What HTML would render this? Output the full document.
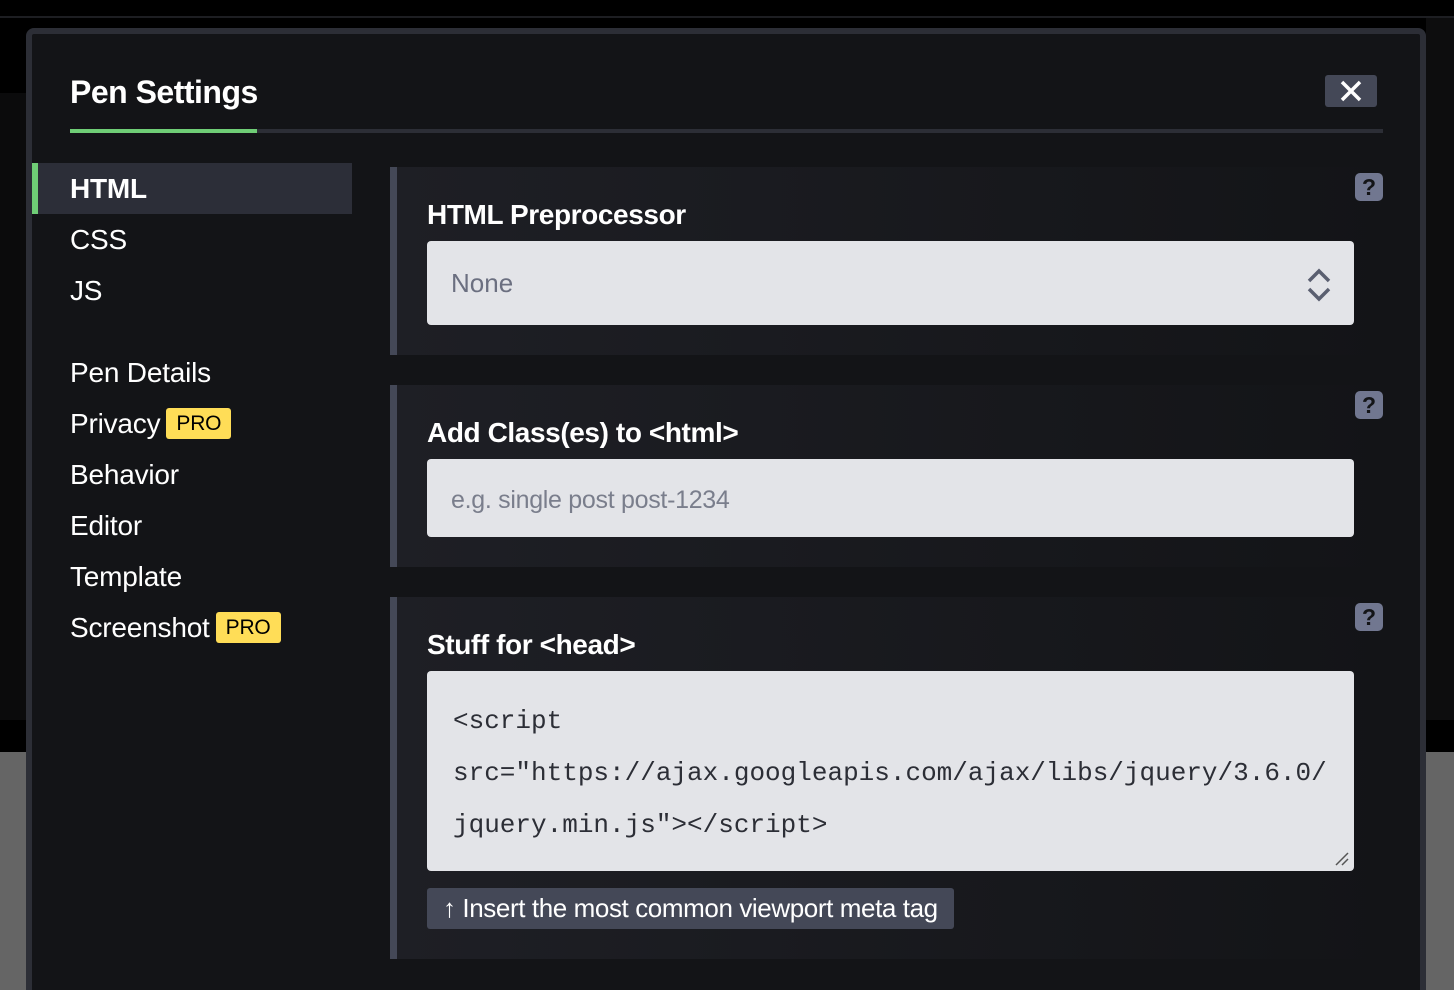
<!DOCTYPE html>
<html style="width:1454px;height:990px;overflow:hidden"><head><meta charset="utf-8"><style>
*{box-sizing:border-box;margin:0;padding:0}
body{width:1454px;height:990px;overflow:hidden;background:#000;font-family:"Liberation Sans",sans-serif;position:relative}
.bg{position:absolute}
.modal{position:absolute;left:26px;top:28px;width:1400px;height:962px;background:#131417;border:6px solid #2c2e36;border-bottom:0;border-radius:8px 8px 0 0}
.title{position:absolute;left:38px;top:40px;color:#fff;font-size:32px;font-weight:bold;letter-spacing:-0.5px}
.tabline{position:absolute;left:38px;top:95px;width:1313px;height:4px;background:#2c2e36}
.tabline i{position:absolute;left:0;top:0;width:187px;height:4px;background:#6fcd76}
.close{position:absolute;left:1293px;top:41px;width:52px;height:32px;background:#444857;border-radius:3px}
.nav{position:absolute;left:0;width:320px;height:51px;color:#fff;font-size:28px;padding-left:38px;line-height:51px;letter-spacing:-0.2px}
.nav.act{background:#2c2e38;border-left:6px solid #6fcd76;padding-left:32px;font-weight:bold}
.pro{display:inline-block;background:#ffdd57;color:#000;font-size:21px;line-height:31px;padding:0 10px;border-radius:3px;vertical-align:3px;margin-left:6px;font-weight:normal}
.sec{position:absolute;left:358px;width:995px;background:linear-gradient(90deg,#1e1f25,#131417);border-left:7px solid #444857}
.lbl{position:absolute;left:30px;color:#fff;font-size:28px;font-weight:bold;letter-spacing:-0.4px}
.inp{position:absolute;left:30px;width:927px;background:#e3e4e8;border-radius:4px}
.q{position:absolute;left:1323px;width:28px;height:28px;background:#717790;border-radius:5px;color:#131417;font-weight:bold;font-size:23px;text-align:center;line-height:28px}
</style></head><body>
<div class="bg" style="left:0;top:16px;width:1454px;height:2px;background:#1d1e22"></div>
<div class="bg" style="left:0;top:93px;width:26px;height:627px;background:#0b0b0c"></div>
<div class="bg" style="left:0;top:752px;width:26px;height:238px;background:#656565"></div>
<div class="bg" style="left:1426px;top:18px;width:28px;height:702px;background:#0d0d0e"></div>
<div class="bg" style="left:1426px;top:752px;width:28px;height:238px;background:#656565"></div>
<div class="modal">
<div class="title">Pen Settings</div>
<div class="tabline"><i></i></div>
<div class="close"><svg width="52" height="32"><path d="M17 7L35 25M35 7L17 25" stroke="#fff" stroke-width="3.5"/></svg></div>
<div class="nav act" style="top:129px">HTML</div>
<div class="nav" style="top:180px">CSS</div>
<div class="nav" style="top:231px">JS</div>
<div class="nav" style="top:313px">Pen Details</div>
<div class="nav" style="top:364px">Privacy<span class="pro">PRO</span></div>
<div class="nav" style="top:415px">Behavior</div>
<div class="nav" style="top:466px">Editor</div>
<div class="nav" style="top:517px">Template</div>
<div class="nav" style="top:568px">Screenshot<span class="pro">PRO</span></div>

<div class="sec" style="top:133px;height:188px">
<div class="lbl" style="top:32px">HTML Preprocessor</div>
<div class="inp" style="top:74px;height:84px"><span style="position:absolute;left:24px;top:27px;font-size:26px;color:#6b6f80">None</span>
<svg style="position:absolute;left:878px;top:24px" width="30" height="40"><path d="M4 16L14 6L24 16M4 24L14 34L24 24" stroke="#5a5f70" stroke-width="3.5" fill="none"/></svg></div>
</div>
<div class="q" style="top:139px">?</div>

<div class="sec" style="top:351px;height:182px">
<div class="lbl" style="top:32px">Add Class(es) to &lt;html&gt;</div>
<div class="inp" style="top:74px;height:78px"><span style="position:absolute;left:24px;top:27px;font-size:25px;color:#7a7e8c;letter-spacing:-0.3px">e.g. single post post-1234</span></div>
</div>
<div class="q" style="top:357px">?</div>

<div class="sec" style="top:563px;height:362px">
<div class="lbl" style="top:32px">Stuff for &lt;head&gt;</div>
<div class="inp" style="top:74px;height:200px;font-family:'Liberation Mono',monospace;font-size:26px;color:#2c2e36;line-height:52px;padding:24px 26px;white-space:nowrap">&lt;script<br>src="https://ajax.googleapis.com/ajax/libs/jquery/3.6.0/<br>jquery.min.js"&gt;&lt;/script&gt;
<svg style="position:absolute;right:4px;bottom:4px" width="16" height="16"><path d="M2 14L14 2M8 14L14 8" stroke="#555" stroke-width="1.5"/></svg></div>
<div style="position:absolute;left:30px;top:291px;height:41px;background:#444857;border-radius:3px;color:#fff;font-size:26px;line-height:41px;padding:0 16px;letter-spacing:-0.4px">↑ Insert the most common viewport meta tag</div>
</div>
<div class="q" style="top:569px">?</div>
</div>
</body></html>
